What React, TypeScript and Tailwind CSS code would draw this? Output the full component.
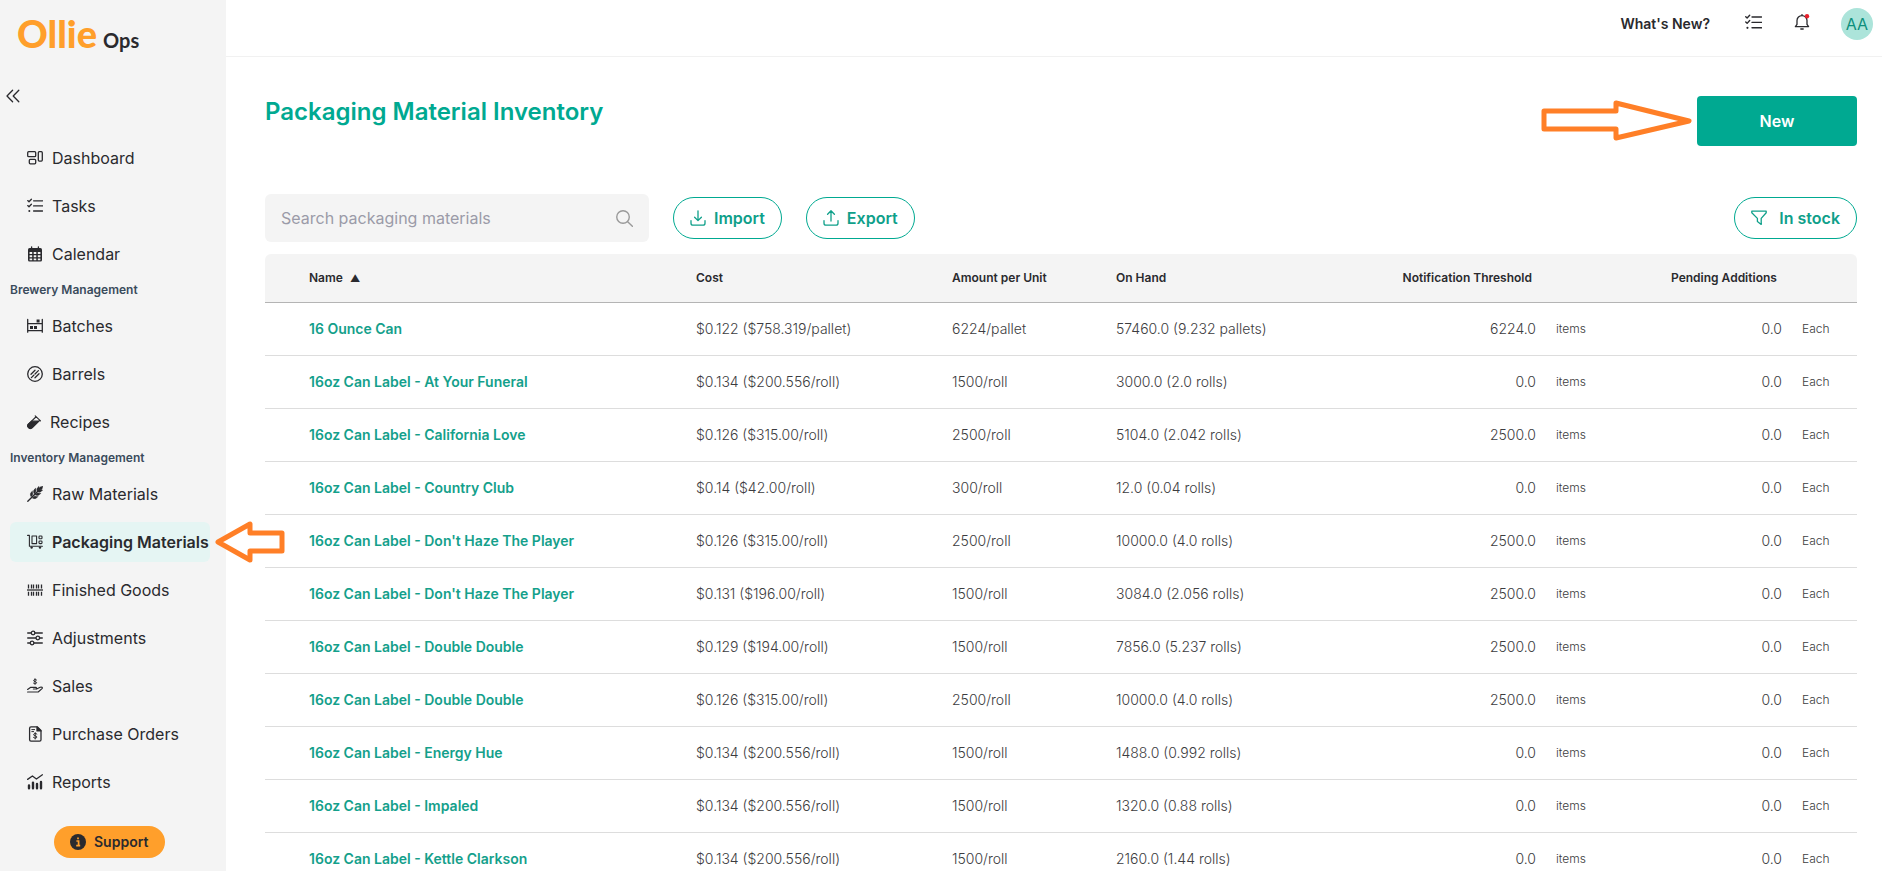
import React from 'react';

interface NavItem {
  label: string;
  icon: React.ReactNode;
  active?: boolean;
}

interface Material {
  name: string;
  cost: string;
  perUnit: string;
  onHand: string;
  threshold: string;
}

const Icon = ({ children, className = 'h-4 w-4' }: { children: React.ReactNode; className?: string }) => (
  <svg
    viewBox="0 0 16 16"
    fill="none"
    stroke="currentColor"
    strokeWidth="1.3"
    strokeLinecap="round"
    strokeLinejoin="round"
    className={`shrink-0 ${className}`}
    aria-hidden="true"
  >
    {children}
  </svg>
);

const ChecklistIcon = ({ className }: { className?: string }) => (
  <Icon className={className}>
    <path d="M.7 2.6 2 3.8 4.4 1.2M.7 7.6 2 8.8l2.4-2.6M6.6 2.8h9M6.6 7.9h9M6.6 13h9" />
    <circle cx="2.3" cy="13" r="1" fill="currentColor" stroke="none" />
  </Icon>
);

const mainItems: NavItem[] = [
  {
    label: 'Dashboard',
    icon: (
      <Icon>
        <rect x=".7" y="1.7" width="8" height="5" rx="1" />
        <rect x="2.3" y="9.4" width="6.4" height="4.4" rx="1" />
        <rect x="11.3" y="1.7" width="4" height="9.4" rx="1" />
      </Icon>
    ),
  },
  { label: 'Tasks', icon: <ChecklistIcon /> },
  {
    label: 'Calendar',
    icon: (
      <Icon>
        <path d="M4.6.8v2M11.4.8v2" />
        <rect x="1" y="2" width="14" height="13.6" rx="1.6" fill="currentColor" stroke="none" />
        <path
          d="M2.6 6h2.6v2H2.6zM6.7 6h2.6v2H6.7zM10.8 6h2.6v2h-2.6zM2.6 9.2h2.6v2H2.6zM6.7 9.2h2.6v2H6.7zM10.8 9.2h2.6v2h-2.600zM2.6 12.400h2.600v1.800H2.600zM6.700 12.400h2.600v1.800H6.700zM10.800 12.400h2.600v1.800h-2.600z"
          fill="#f4f4f4"
          stroke="none"
        />
      </Icon>
    ),
  },
];

const breweryItems: NavItem[] = [
  {
    label: 'Batches',
    icon: (
      <Icon>
        <path d="M.7 1.4v12.8M15.3 1.4v12.8M.7 5.6h14.6M.7 12.6h14.6" />
        <path d="M3 8h3v3H3zM7 8h3v3H7zM9.6 1.6h3v3h-3z" fill="currentColor" stroke="none" />
      </Icon>
    ),
  },
  {
    label: 'Barrels',
    icon: (
      <Icon>
        <circle cx="8" cy="8" r="7.3" />
        <path d="m4 8.2 4-4M4.4 11.6l2.4-2.4M8 8l3.4-3.4M8 11.8l4-4" />
      </Icon>
    ),
  },
  {
    label: 'Recipes',
    icon: (
      <Icon className="h-4 w-[14px]">
        <path d="m9.4.9 6 5.800M10.400 2 1.600 10.400a3 3 0 0 0 4.200 4.200L14.600 6" />
        <path d="M5.400 7h7.400l-7 7.400a2.900 2.900 0 0 1-4.200-4z" fill="currentColor" />
      </Icon>
    ),
  },
];

const inventoryItems: NavItem[] = [
  {
    label: 'Raw Materials',
    icon: (
      <Icon>
        <path d="M.8 15.2 12.8 3.2" />
        <path
          d="M15.6.4c-2.4 0-3.8 1-3.7 3.7 2.7.1 3.7-1.3 3.7-3.7zM11.8.8c-2 1.2-2.6 2.6-1.3 4.7C12.2 3.8 12.6 2.5 11.8.8zM15.2 4.2c-1.2 2-2.6 2.6-4.7 1.3 1.7-1.7 3-2.1 4.7-1.3zM8.400 2.600c-2 1.400-2.400 3-1.100 5.300 1.900-1.700 2.100-3.300 1.100-5.300zM13.400 7.600c-1.400 2-3 2.400-5.300 1.100 1.700-1.900 3.300-2.100 5.300-1.100zM5.200 5.400c-2 1.400-2.400 3-1.100 5.300 1.900-1.700 2.100-3.300 1.100-5.300zM10.600 10.800c-1.400 2-3 2.400-5.300 1.100 1.700-1.900 3.300-2.100 5.300-1.100z"
          fill="currentColor"
          strokeWidth=".5"
        />
      </Icon>
    ),
  },
  {
    label: 'Packaging Materials',
    active: true,
    icon: (
      <Icon>
        <path d="M.6 1.400h1.800v10.800h13" strokeWidth="1.100" />
        <rect x="5" y="2" width="4.600" height="7.600" strokeWidth="1.100" />
        <rect x="12" y="2" width="3" height="2.800" rx=".8" strokeWidth="1.100" />
        <rect x="12" y="7" width="3" height="2.600" rx=".8" strokeWidth="1.100" />
        <circle cx="4.600" cy="13.600" r="1.200" fill="currentColor" stroke="none" />
        <circle cx="13" cy="13.600" r="1.200" fill="currentColor" stroke="none" />
      </Icon>
    ),
  },
  {
    label: 'Finished Goods',
    icon: (
      <Icon>
        <path d="M0 8h16" strokeLinecap="butt" />
        <path
          d="M1.500 2.500v4M4.500 2.500v4M6.500 2.500v4M9.500 2.500v4M11.500 2.500v4M14.500 2.500v4M1.500 9.800v4M4.500 9.800v4M6.500 9.800v4M9.500 9.800v4M11.500 9.800v4M14.500 9.800v4"
          strokeLinecap="butt"
        />
      </Icon>
    ),
  },
  {
    label: 'Adjustments',
    icon: (
      <Icon>
        <path d="M.7 3h3.500M8 3h7.300M.7 8h8M12.700 8h2.600M.7 13h2.500M7 13h8.300" />
        <circle cx="6.100" cy="3" r="1.800" />
        <circle cx="10.800" cy="8" r="1.800" />
        <circle cx="5.100" cy="13" r="1.800" />
      </Icon>
    ),
  },
  {
    label: 'Sales',
    icon: (
      <Icon>
        <path d="M9.600 2c-.8-.7-3-.6-3 .6 0 1.400 3 .7 3 2.100 0 1.200-2.200 1.300-3.100.5M8 .7v5.600" strokeWidth="1" />
        <path d="M.6 11.400 3.400 9.400h5.200c1.200 0 1.200 1.600 0 1.600H6.400M9.600 11l3.600-1.800c1.400-.5 2.800.4 1.800 1.400L11.200 14H.6" strokeWidth="1.200" />
      </Icon>
    ),
  },
  {
    label: 'Purchase Orders',
    icon: (
      <Icon>
        <path d="M4 .9h6.400L14 4.500v9.200a1.400 1.400 0 0 1-1.400 1.400H4a1.400 1.400 0 0 1-1.400-1.400V2.300A1.400 1.400 0 0 1 4 .9z" />
        <path d="M10 .9v4h4z" fill="currentColor" />
        <path d="M4.800 3.600h2.800M4.800 5.600h1.800" strokeWidth="1" />
        <path d="M9.900 8c-.9-.8-3.300-.7-3.300.7 0 1.500 3.300.8 3.300 2.300 0 1.400-2.500 1.400-3.400.5M8.200 6.600v6.400" strokeWidth="1" />
      </Icon>
    ),
  },
  {
    label: 'Reports',
    icon: (
      <Icon>
        <path d="M.6 5.400 5.400 2l4 3L15.400.8" />
        <path d="M2 11.400v2.800M6 8.600v5.600M10 10v4.200M14 8v6.200" strokeWidth="2.400" />
      </Icon>
    ),
  },
];

const materials: Material[] = [
  { name: '16 Ounce Can', cost: '$0.122 ($758.319/pallet)', perUnit: '6224/pallet', onHand: '57460.0 (9.232 pallets)', threshold: '6224.0' },
  { name: '16oz Can Label - At Your Funeral', cost: '$0.134 ($200.556/roll)', perUnit: '1500/roll', onHand: '3000.0 (2.0 rolls)', threshold: '0.0' },
  { name: '16oz Can Label - California Love', cost: '$0.126 ($315.00/roll)', perUnit: '2500/roll', onHand: '5104.0 (2.042 rolls)', threshold: '2500.0' },
  { name: '16oz Can Label - Country Club', cost: '$0.14 ($42.00/roll)', perUnit: '300/roll', onHand: '12.0 (0.04 rolls)', threshold: '0.0' },
  { name: "16oz Can Label - Don't Haze The Player", cost: '$0.126 ($315.00/roll)', perUnit: '2500/roll', onHand: '10000.0 (4.0 rolls)', threshold: '2500.0' },
  { name: "16oz Can Label - Don't Haze The Player", cost: '$0.131 ($196.00/roll)', perUnit: '1500/roll', onHand: '3084.0 (2.056 rolls)', threshold: '2500.0' },
  { name: '16oz Can Label - Double Double', cost: '$0.129 ($194.00/roll)', perUnit: '1500/roll', onHand: '7856.0 (5.237 rolls)', threshold: '2500.0' },
  { name: '16oz Can Label - Double Double', cost: '$0.126 ($315.00/roll)', perUnit: '2500/roll', onHand: '10000.0 (4.0 rolls)', threshold: '2500.0' },
  { name: '16oz Can Label - Energy Hue', cost: '$0.134 ($200.556/roll)', perUnit: '1500/roll', onHand: '1488.0 (0.992 rolls)', threshold: '0.0' },
  { name: '16oz Can Label - Impaled', cost: '$0.134 ($200.556/roll)', perUnit: '1500/roll', onHand: '1320.0 (0.88 rolls)', threshold: '0.0' },
  { name: '16oz Can Label - Kettle Clarkson', cost: '$0.134 ($200.556/roll)', perUnit: '1500/roll', onHand: '2160.0 (1.44 rolls)', threshold: '0.0' },
];

const NavList = ({ items }: { items: NavItem[] }) => (
  <ul>
    {items.map((item) => (
      <li key={item.label} className="relative py-1">
        <a
          href="#"
          aria-current={item.active ? 'page' : undefined}
          className={`flex h-10 items-center gap-[9px] whitespace-nowrap rounded-md pl-[17px] text-base ${
            item.active ? 'bg-[#e5f5f3] font-semibold' : 'font-normal'
          }`}
        >
          {item.icon}
          {item.label}
        </a>
        {item.active && (
          <svg viewBox="0 0 72 44" className="absolute left-full top-1/2 z-10 ml-1 h-11 w-[72px] -translate-y-1/2" aria-hidden="true">
            <path d="M4 22 36 4v9h32v18H36v9z" fill="#fff" stroke="#ff7f27" strokeWidth="5" strokeLinejoin="round" />
          </svg>
        )}
      </li>
    ))}
  </ul>
);

const Sidebar = () => (
  <aside className="flex w-[226px] shrink-0 flex-col bg-[#f4f4f4] pl-[10px] pr-4 text-[#2a2a2e]">
    <a href="#" className="flex h-[72px] items-baseline gap-[6px] pl-[7px] pt-[14px] font-['Lato',sans-serif] leading-none">
      <span className="text-[38px] font-black text-[#ff9f2b]">Ollie</span>
      <span className="text-xl font-bold">Ops</span>
    </a>
    <button type="button" aria-label="Collapse menu" className="-ml-1 mb-[14px] flex h-12 w-4 items-center">
      <Icon>
        <path d="M6.600 2.200 1 8l5.600 5.800M12.800 2.200 7.200 8l5.600 5.800" />
      </Icon>
    </button>
    <nav>
      <NavList items={mainItems} />
      <h2 className="h-6 text-xs font-semibold leading-6 text-[#3a4b5c]">Brewery Management</h2>
      <NavList items={breweryItems} />
      <h2 className="h-6 text-xs font-semibold leading-6 text-[#3a4b5c]">Inventory Management</h2>
      <NavList items={inventoryItems} />
    </nav>
    <button type="button" className="ml-11 mt-5 flex h-8 w-[111px] items-center gap-2 rounded-full bg-[#ff9f2b] pl-4 text-sm font-semibold">
      <svg viewBox="0 0 16 16" className="h-4 w-4" aria-hidden="true">
        <circle cx="8" cy="8" r="8" fill="currentColor" />
        <path d="M6.400 7h2.200v4.400M6.200 11.600h4M8 3.400v1.800" fill="none" stroke="#ff9f2b" strokeWidth="1.700" />
      </svg>
      Support
    </button>
  </aside>
);

const TopBar = () => (
  <header className="flex h-[57px] items-start justify-end border-b border-[#f1f1f1] pr-[9px]">
    <div className="flex h-12 items-center">
      <a href="#" className="mr-[35px] text-sm font-semibold">What's New?</a>
      <button type="button" aria-label="Tasks" className="mr-8">
        <ChecklistIcon className="mb-1 h-[17px] w-[17px]" />
      </button>
      <button type="button" aria-label="Notifications" className="mr-[31px]">
        <Icon className="mb-1 h-4 w-4">
          <path d="M8 .6v1M1.400 12.600h13.200L13 10.400V6.600a5 5 0 0 0-10 0v3.800zM6.800 15h2.400" />
          <circle cx="13" cy="2.200" r="2.200" fill="#e8202c" stroke="none" />
        </Icon>
      </button>
      <button type="button" aria-label="Account" className="h-8 w-8 rounded-full bg-[#ace4da] text-base text-[#0d8f7c]">
        AA
      </button>
    </div>
  </header>
);

const pill = 'flex h-[42px] items-center rounded-full border border-[#00a991] px-4 text-base font-semibold text-[#0fa08a]';

const Toolbar = () => (
  <div className="flex items-center">
    <div className="mr-6 flex h-12 w-96 items-center rounded-md bg-[#f4f4f4] px-4">
      <input
        type="search"
        aria-label="Search packaging materials"
        placeholder="Search packaging materials"
        className="min-w-0 flex-1 bg-transparent text-base outline-none placeholder:text-[#9b9ba8]"
      />
      <Icon className="h-[17px] w-[17px] text-[#999999]">
        <circle cx="6.600" cy="6.600" r="5.900" />
        <path d="m11 11 4.400 4.400" />
      </Icon>
    </div>
    <button type="button" className={`${pill} mr-6 gap-2`}>
      <Icon>
        <path d="M8 .8v9.600M4.600 7.200 8 10.600l3.400-3.400M1 10.600v2.600a2 2 0 0 0 2 2h10a2 2 0 0 0 2-2v-2.600" />
      </Icon>
      Import
    </button>
    <button type="button" className={`${pill} gap-2`}>
      <Icon>
        <path d="M8 11V1M4.600 4.200 8 .8l3.400 3.400M1 10.600v2.600a2 2 0 0 0 2 2h10a2 2 0 0 0 2-2v-2.600" />
      </Icon>
      Export
    </button>
    <button type="button" className={`${pill} ml-auto gap-3`}>
      <Icon>
        <path d="M.8 1.200h14.400v1.600l-5 5.600v6L6.400 11.600V8.400L.8 2.800z" />
      </Icon>
      In stock
    </button>
  </div>
);

const MaterialsTable = () => (
  <table className="mt-3 w-full table-fixed border-separate border-spacing-0 text-left">
    <colgroup>
      <col />
      <col className="w-[256px]" />
      <col className="w-[164px]" />
      <col className="w-[280px]" />
      <col className="w-[140px]" />
      <col className="w-[135px]" />
      <col className="w-[111px]" />
      <col className="w-[75px]" />
    </colgroup>
    <thead className="text-xs text-[#2a2a2e] [&_th]:h-[49px] [&_th]:border-b [&_th]:border-[#b4b4b4] [&_th]:bg-[#f4f4f4] [&_th]:font-semibold">
      <tr>
        <th scope="col" aria-sort="ascending" className="rounded-tl-md pl-11">
          Name <span className="ml-1 text-[10px]">▲</span>
        </th>
        <th scope="col">Cost</th>
        <th scope="col">Amount per Unit</th>
        <th scope="col">On Hand</th>
        <th scope="col" className="whitespace-nowrap pr-1 text-right">Notification Threshold</th>
        <th />
        <th scope="col" className="whitespace-nowrap">Pending Additions</th>
        <th className="rounded-tr-md" />
      </tr>
    </thead>
    <tbody className="text-sm font-light text-[#3c3c40] [&_td]:h-[53px] [&_td]:border-b [&_td]:border-[#dddddd]">
      {materials.map((m, i) => (
        <tr key={i}>
          <td className="pl-11">
            <a href="#" className="font-semibold text-[#14a08b]">{m.name}</a>
          </td>
          <td>{m.cost}</td>
          <td>{m.perUnit}</td>
          <td>{m.onHand}</td>
          <td className="text-right">{m.threshold}</td>
          <td className="pl-5 text-xs">items</td>
          <td className="text-right">0.0</td>
          <td className="pl-5 text-xs">Each</td>
        </tr>
      ))}
    </tbody>
  </table>
);

const App: React.FC = () => {
  return (
    <div className="flex h-screen overflow-hidden bg-white font-['Inter',sans-serif] text-[#2a2a2e]">
      <Sidebar />
      <div className="min-w-0 flex-1">
        <TopBar />
        <main className="pl-[39px] pr-[25px] pt-[39px]">
          <div className="mb-12 flex items-start justify-between">
            <h1 className="text-2xl font-semibold text-[#00a991]">Packaging Material Inventory</h1>
            <div className="relative">
              <svg viewBox="0 0 152 44" className="absolute right-full top-1/2 mr-1 h-11 w-[152px] -translate-y-1/2" aria-hidden="true">
                <path d="M3 12h72V4l73 18-73 17v-9H3z" fill="none" stroke="#ff7f27" strokeWidth="5" strokeLinejoin="round" />
              </svg>
              <button type="button" className="h-[50px] w-40 rounded bg-[#00a991] text-base font-semibold text-white">
                New
              </button>
            </div>
          </div>
          <Toolbar />
          <MaterialsTable />
        </main>
      </div>
    </div>
  );
};

export default App;
